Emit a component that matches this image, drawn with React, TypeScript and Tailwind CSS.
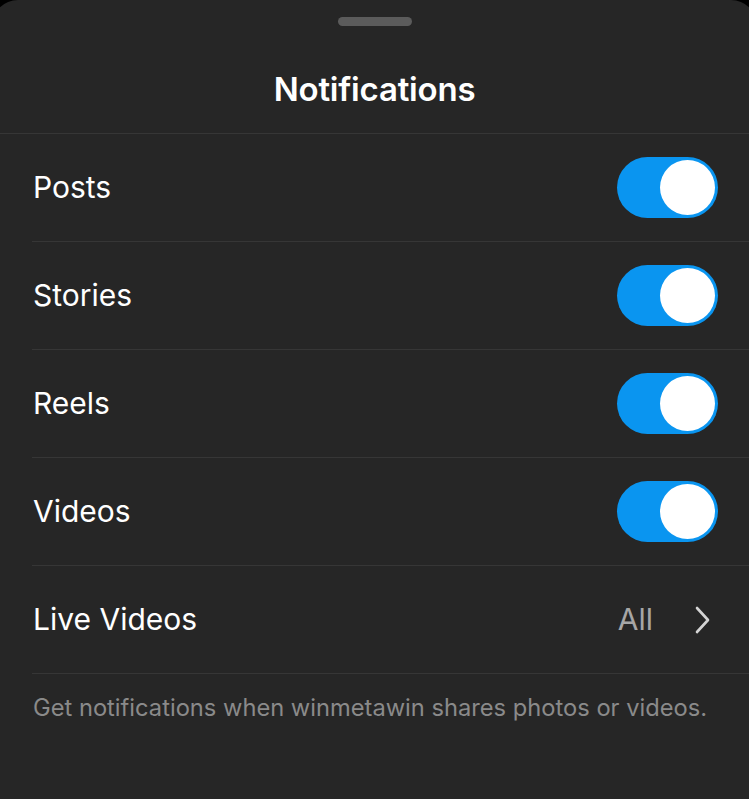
type Row = { label: string; on?: boolean; value?: string }

const rows: Row[] = [
  { label: 'Posts', on: true },
  { label: 'Stories', on: true },
  { label: 'Reels', on: true },
  { label: 'Videos', on: true },
  { label: 'Live Videos', value: 'All' },
]

function Toggle({ on }: { on: boolean }) {
  return (
    <div
      className={
        'w-[101px] h-[61px] rounded-full flex items-center px-[3px] ' +
        (on ? 'bg-[#0a95f0] justify-end' : 'bg-[#3a3a3c] justify-start')
      }
    >
      <div className="w-[55px] h-[55px] rounded-full bg-white" />
    </div>
  )
}

function Chevron() {
  return (
    <svg width="15" height="28" viewBox="0 0 15 28" fill="none" className="text-[#d4d4d4]">
      <polyline
        points="2,2 13,14 2,26"
        stroke="currentColor"
        strokeWidth="2.6"
        strokeLinecap="round"
        strokeLinejoin="round"
      />
    </svg>
  )
}

export default function App() {
  return (
    <div
      className="w-[749px] h-[799px] bg-black overflow-hidden"
      style={{ fontFamily: 'Inter, "Noto Sans", sans-serif' }}
    >
      <div className="-mx-[8px] h-full bg-[#262626] rounded-t-[26px] px-[8px]">
        {/* grab handle */}
        <div className="pt-[17px] flex justify-center">
          <div className="w-[74px] h-[9px] rounded-full bg-[#5b5b5b]" />
        </div>

        {/* title */}
        <div className="h-[108px] pt-[20px] flex items-center justify-center border-b border-[#363636]">
          <h1 className="text-[33px] font-semibold text-white tracking-[-0.2px]">Notifications</h1>
        </div>

        {/* settings list */}
        <ul>
          {rows.map(row => (
            <li
              key={row.label}
              className="ml-[32px] h-[108px] flex items-center justify-between pr-[31px] border-b border-[#363636]"
            >
              <span className="pl-[1px] text-[30px] text-white">{row.label}</span>
              {row.value ? (
                <div className="flex items-center gap-[42px] pr-[8px]">
                  <span className="text-[30px] text-[#a6a6a6]">{row.value}</span>
                  <Chevron />
                </div>
              ) : (
                <Toggle on={!!row.on} />
              )}
            </li>
          ))}
        </ul>

        <p className="pl-[33px] pt-[20px] text-[23.7px] leading-[28px] text-[#8a8a8a]">
          Get notifications when winmetawin shares photos or videos.
        </p>
      </div>
    </div>
  )
}
